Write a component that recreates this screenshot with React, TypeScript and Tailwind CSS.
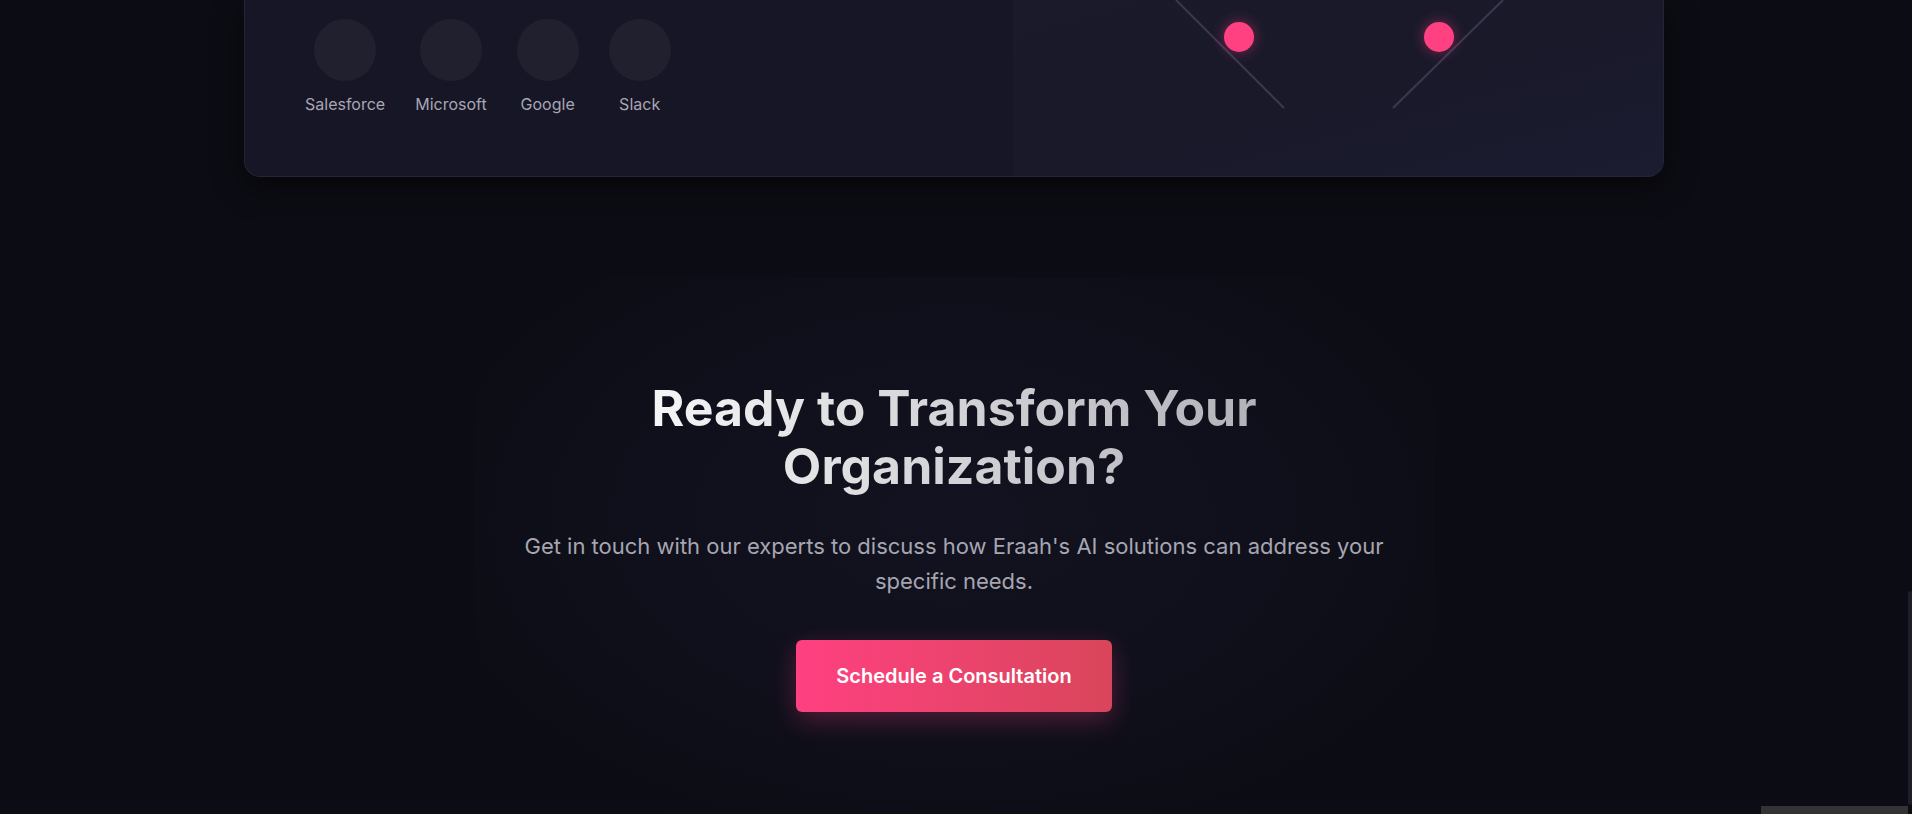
import React from "react";

const partners = ["Salesforce", "Microsoft", "Google", "Slack"];

export default function App() {
  return (
    <div className="relative h-[814px] w-full overflow-hidden bg-[#0c0c14] font-['Inter','Noto_Sans',sans-serif]">
      <div className="flex h-full">
        <main className="flex-1 flex flex-col">
          {/* Integrations card (scrolled, top cut off) */}
          <section className="flex justify-center">
            <div className="flex h-[177px] w-[1420px] overflow-hidden rounded-b-2xl border border-t-0 border-[#24233a] bg-[#171626] shadow-[0_10px_30px_rgba(0,0,0,0.55)]">
              <div className="w-[768px] pl-[60px] pt-[19px]">
                <div className="flex gap-[30px]">
                  {partners.map((p) => (
                    <div key={p} className="flex flex-col items-center gap-[11px]">
                      <div className="h-[62px] w-[62px] rounded-full bg-[#21202e]" />
                      <span className="text-[16px] leading-6 text-[#a7a7b2]">{p}</span>
                    </div>
                  ))}
                </div>
              </div>
              <div className="relative flex-1 bg-gradient-to-br from-[#1a1a2b] via-[#19192a] to-[#1c1c31]">
                <svg className="absolute inset-0 h-full w-full" viewBox="0 0 650 176" preserveAspectRatio="none">
                  <line x1="163" y1="0" x2="271" y2="108" stroke="#393850" strokeWidth="2" />
                  <line x1="490" y1="0" x2="380" y2="108" stroke="#393850" strokeWidth="2" />
                </svg>
                <div className="absolute left-[211px] top-[22px] h-[30px] w-[30px] rounded-full bg-[#ff4081] shadow-[0_0_14px_rgba(255,64,129,0.45)]" />
                <div className="absolute left-[411px] top-[22px] h-[30px] w-[30px] rounded-full bg-[#ff4081] shadow-[0_0_14px_rgba(255,64,129,0.45)]" />
              </div>
            </div>
          </section>

          {/* CTA */}
          <section className="mx-auto mt-[100px] flex w-[960px] flex-1 flex-col items-center bg-[radial-gradient(ellipse_at_50%_45%,#121220_0%,#10101c_45%,#0c0c14_85%)] pt-[102px]">
            <h2 className="max-w-[768px] bg-gradient-to-r from-white to-[#a9a9b1] bg-clip-text text-center text-[50px] font-bold leading-[58px] text-transparent">
              Ready to Transform Your Organization?
            </h2>
            <p className="mt-[34px] max-w-[880px] text-center text-[22px] leading-[35px] text-[#a6a6b1]">
              Get in touch with our experts to discuss how Eraah's AI solutions can address your specific needs.
            </p>
            <button className="mt-[41px] h-[72px] rounded-md bg-gradient-to-r from-[#ff4081] to-[#d9455a] px-10 text-[20px] font-semibold leading-7 text-white shadow-[0_8px_26px_rgba(255,64,129,0.28)]">
              Schedule a Consultation
            </button>
          </section>
        </main>
        <div className="flex w-[4px] flex-col">
          <div className="mt-[591px] h-[214px] rounded-full bg-[#1e1e2b]" />
        </div>
      </div>
      <div className="absolute bottom-0 right-[4px] h-[8px] w-[147px] bg-[#333333]" />
    </div>
  );
}
